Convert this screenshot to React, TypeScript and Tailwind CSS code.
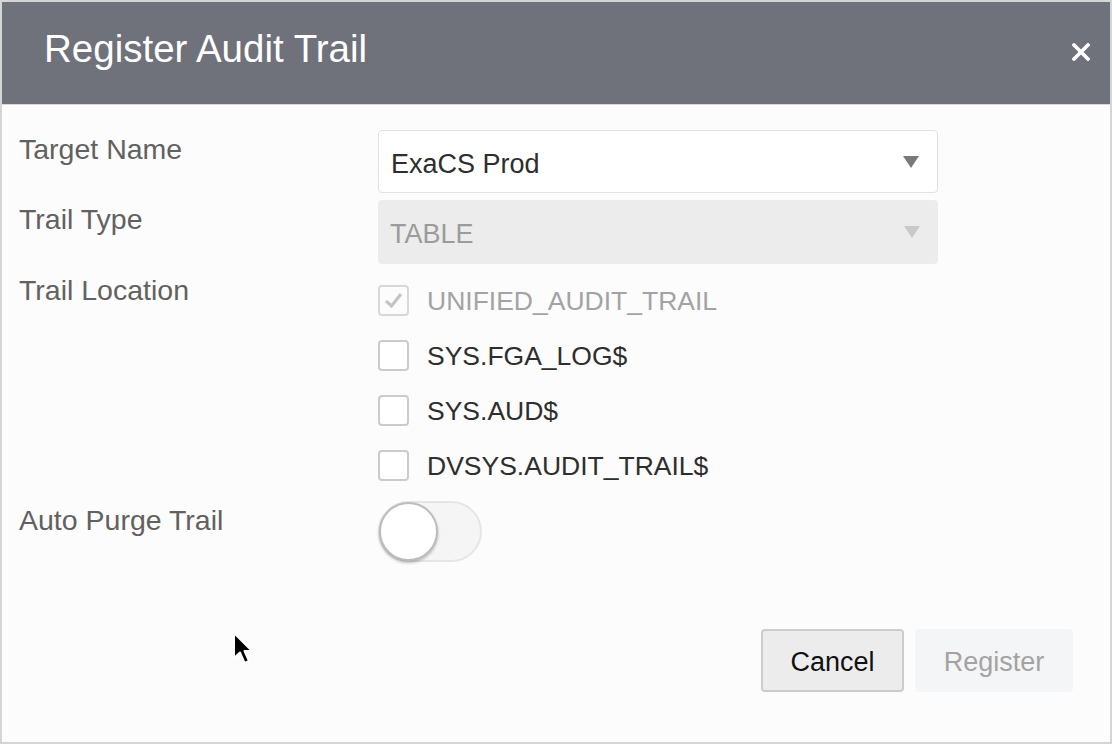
export default function App() {
  const trails = [
    { name: "UNIFIED_AUDIT_TRAIL", checked: true, disabled: true },
    { name: "SYS.FGA_LOG$", checked: false, disabled: false },
    { name: "SYS.AUD$", checked: false, disabled: false },
    { name: "DVSYS.AUDIT_TRAIL$", checked: false, disabled: false },
  ];

  return (
    <div
      className="w-[1112px] h-[744px] border-2 border-[#d5d5d5] bg-[#fcfcfc] flex flex-col relative"
      style={{ fontFamily: '"Liberation Sans", Arial, sans-serif' }}
    >
      {/* Header */}
      <div className="h-[103px] bg-[#6f717b] border-b border-[#d9d9d9] flex items-center justify-between pl-[42px] pr-[17px] shrink-0">
        <h1 className="text-white text-[38.5px] leading-none pb-[7px]">Register Audit Trail</h1>
        <button className="w-[24px] h-[24px] flex items-center justify-center pb-[2px]">
          <svg width="18" height="18" viewBox="0 0 18 18">
            <path d="M2 2 L16 16 M16 2 L2 16" stroke="white" strokeWidth="3.6" strokeLinecap="square" />
          </svg>
        </button>
      </div>

      {/* Body */}
      <div className="flex-1 flex flex-col pl-[17px] pt-[25px] text-[27px] leading-[32px]">
        {/* Target Name */}
        <div className="flex">
          <div className="w-[359px] text-[#616161] text-[28.5px] pt-[3px]">Target Name</div>
          <div className="w-[560px] h-[63px] border border-[#e2e2e2] rounded-[4px] bg-white flex items-center justify-between pl-[12px] pr-[18px]">
            <span className="text-[#2e2e2e] pt-[4px]">ExaCS Prod</span>
            <span className="w-0 h-0 border-l-[8px] border-r-[8px] border-t-[12px] border-l-transparent border-r-transparent border-t-[#7a7a7a]" />
          </div>
        </div>

        {/* Trail Type */}
        <div className="flex mt-[7px]">
          <div className="w-[359px] text-[#616161] text-[28.5px] pt-[3px]">Trail Type</div>
          <div className="w-[560px] h-[64px] rounded-[4px] bg-[#ececec] flex items-center justify-between pl-[12px] pr-[18px]">
            <span className="text-[#9b9b9b] pt-[4px]">TABLE</span>
            <span className="w-0 h-0 border-l-[8px] border-r-[8px] border-t-[12px] border-l-transparent border-r-transparent border-t-[#c9c9c9]" />
          </div>
        </div>

        {/* Trail Location */}
        <div className="flex mt-[7px]">
          <div className="w-[359px] text-[#616161] text-[28.5px] pt-[3px]">Trail Location</div>
          <div className="flex flex-col pt-[2px]">
            {trails.map((t) => (
              <label key={t.name} className="h-[55px] flex items-center gap-[18px]">
                <span
                  className={
                    t.disabled
                      ? "w-[31px] h-[31px] rounded-[4px] border-2 border-[#d8d8d8] flex items-center justify-center"
                      : "w-[31px] h-[31px] rounded-[4px] border-2 border-[#cbcbcb] bg-white"
                  }
                >
                  {t.checked && (
                    <svg width="21" height="21" viewBox="0 0 21 21">
                      <path d="M3 11 L8.5 16 L18 4" fill="none" stroke="#c4c4c4" strokeWidth="3.2" />
                    </svg>
                  )}
                </span>
                <span className={t.disabled ? "text-[#a3a3a3] text-[26.5px] pt-[1px]" : "text-[#2e2e2e] text-[26.5px] pt-[1px]"}>
                  {t.name}
                </span>
              </label>
            ))}
          </div>
        </div>

        {/* Auto Purge Trail */}
        <div className="flex mt-[8px]">
          <div className="w-[359px] text-[#616161] text-[28.5px] pt-[3px]">Auto Purge Trail</div>
          <div className="w-[104px] h-[61px] rounded-full bg-[#f5f5f5] border-2 border-[#e6e6e6] relative">
            <span className="absolute left-[-1px] top-[-1px] w-[59px] h-[59px] rounded-full bg-white border-2 border-[#bdbdbd] shadow-[0_2px_3px_rgba(0,0,0,0.25)]" />
          </div>
        </div>

        {/* Footer */}
        <div className="flex justify-end gap-[11px] mt-auto mb-[50px] pr-[37px]">
          <button className="w-[143px] h-[63px] rounded-[4px] bg-[#ececec] border-2 border-[#cccccc] text-[#111111] pt-[2px]">
            Cancel
          </button>
          <button className="w-[158px] h-[63px] rounded-[4px] bg-[#f4f5f6] text-[#a3a3a3] pt-[2px]">Register</button>
        </div>
      </div>

      {/* Mouse cursor */}
      <svg className="absolute left-[228px] top-[628px]" width="26" height="40" viewBox="0 0 26 40">
        <path
          d="M4 3 L4 28 L10 22.5 L14.5 33 L19 31 L14.5 21 L22 21 Z"
          fill="black"
          stroke="white"
          strokeWidth="2"
          strokeLinejoin="round"
        />
      </svg>
    </div>
  );
}
